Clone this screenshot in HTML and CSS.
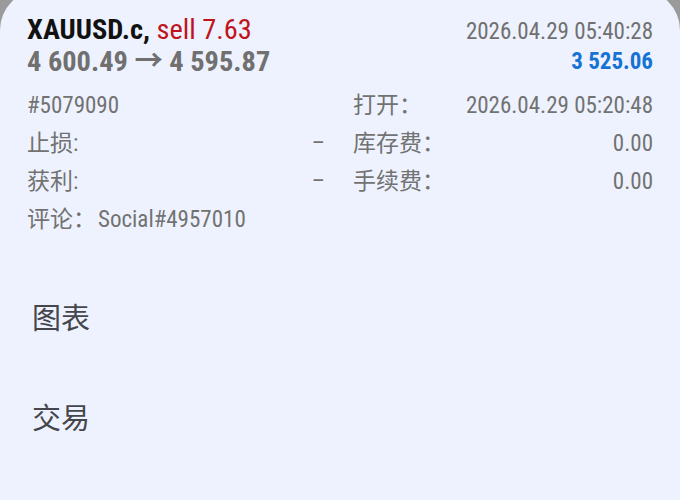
FILE: index.html
```html
<!DOCTYPE html>
<html lang="zh-CN">
<head>
    <meta charset="UTF-8" />
    <meta name="viewport" content="width=device-width, initial-scale=1.0" />
    <title>XAUUSD.c</title>
    <link rel="stylesheet" href="styles.css">
</head>
<body>
    <div class="sheet">
        <div class="header">
            <div class="header-left">
                <div class="symbol">XAUUSD.c, <span class="sell">sell 7.63</span></div>
                <div class="prices">4 600.49 → 4 595.87</div>
            </div>
            <div class="header-right">
                <div class="time">2026.04.29 05:40:28</div>
                <div class="profit">3 525.06</div>
            </div>
        </div>

        <div class="details">
            <div class="row">
                <span class="label">#5079090</span>
                <span class="value"></span>
            </div>
            <div class="row">
                <span class="label">打开：</span>
                <span class="value">2026.04.29 05:20:48</span>
            </div>
            <div class="row">
                <span class="label">止损:</span>
                <span class="value">–</span>
            </div>
            <div class="row">
                <span class="label">库存费：</span>
                <span class="value">0.00</span>
            </div>
            <div class="row">
                <span class="label">获利:</span>
                <span class="value">–</span>
            </div>
            <div class="row">
                <span class="label">手续费：</span>
                <span class="value">0.00</span>
            </div>
            <div class="row row-wide">
                <span class="label">评论：</span>
                <span class="comment">Social#4957010</span>
            </div>
        </div>

        <div class="menu">
            <div class="menu-item">图表</div>
            <div class="menu-item">交易</div>
        </div>
    </div>
</body>
</html>
```

FILE: styles.css
```css
body {
    margin: 0;
    padding: 0;
    height: 500px;
    background-color: #9a9a9a;
    font-family: "Roboto Condensed", "Liberation Sans Narrow", Roboto, "Noto Sans CJK SC", sans-serif;
    overflow: hidden;
}

.sheet {
    box-sizing: border-box;
    margin-top: -10px;
    height: 510px;
    padding: 24px 27px 0 27px;
    background-color: #eef2fe;
    border-radius: 40px 40px 0 0;
}

.header {
    display: flex;
    justify-content: space-between;
}

.symbol {
    font-size: 28.4px;
    font-weight: bold;
    color: #111111;
    line-height: 32px;
}

.symbol .sell {
    font-weight: normal;
    color: #c0141c;
}

.prices {
    font-size: 28.4px;
    font-weight: bold;
    color: #707070;
    line-height: 32px;
}

.header-right {
    text-align: right;
    padding-top: 3px;
}

.time {
    font-size: 23px;
    color: #707070;
    line-height: 30px;
}

.profit {
    font-size: 23px;
    font-weight: bold;
    color: #1473d4;
    line-height: 30px;
}

.details {
    display: grid;
    grid-template-columns: 298px 300px;
    column-gap: 28px;
    margin-top: 9px;
    font-size: 23px;
    color: #727272;
}

.row {
    display: flex;
    justify-content: space-between;
    height: 38px;
    line-height: 38px;
}

.row-wide {
    grid-column: 1 / 3;
    justify-content: flex-start;
}

.comment {
    margin-left: 2px;
}

.menu {
    margin-top: 64px;
    padding-left: 5px;
}

.menu-item {
    font-size: 29px;
    color: #45464c;
    height: 100px;
    line-height: 32px;
}
```
